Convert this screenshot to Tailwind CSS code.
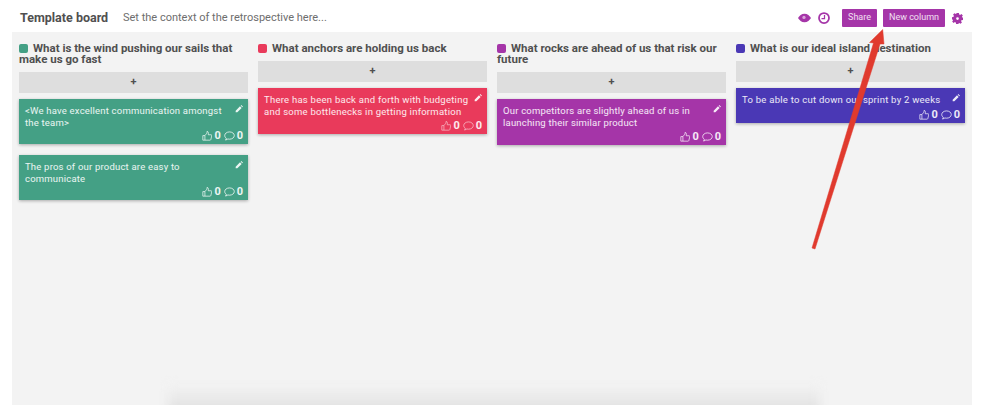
<!DOCTYPE html>
<html lang="en">
<head>
    <meta charset="UTF-8">
    <meta name="viewport" content="width=device-width, initial-scale=1.0">
    <title>Template board</title>
    <script src="https://cdn.jsdelivr.net/npm/@tailwindcss/browser@4"></script>
</head>
<body class="bg-white font-['Roboto',sans-serif] h-[419px] w-[983px] overflow-hidden relative">
    <!-- Header -->
    <header class="h-[32px] pt-[4px] pl-[20px] pr-[20px] flex items-center">
        <h1 class="text-[12.500px] font-bold text-[#505050] w-[103px]">Template board</h1>
        <p class="text-[11px] text-[#6e6e6e]">Set the context of the retrospective here...</p>
        <div class="ml-auto flex items-center">
            <svg class="w-[13px] h-[10px] text-[#a535a8]" viewBox="0 0 24 18" fill="currentColor"><path d="M12 1C6.500 1 2.500 5 0 9c2.500 4 6.500 8 12 8s9.500-4 12-8c-2.500-4-6.500-8-12-8z"/><circle cx="11" cy="8" r="3" fill="#d9a6da"/></svg>
            <svg class="w-[12px] h-[12px] ml-[7px] text-[#a535a8]" viewBox="0 0 24 24" fill="none" stroke="currentColor" stroke-width="3.500"><circle cx="12" cy="12" r="10"/><path stroke-width="2.500" d="M13 6v7H7"/></svg>
            <button class="ml-[12px] h-[18px] w-[35px] bg-[#a535a8] text-white/85 text-[9px] rounded-[1px]">Share</button>
            <button class="ml-[6px] h-[18px] w-[62px] bg-[#a535a8] text-white/85 text-[9px] rounded-[1px]">New column</button>
            <svg class="w-[11px] h-[11px] ml-[7px] text-[#a535a8]" viewBox="0 0 24 24" fill="currentColor"><path fill-rule="evenodd" d="M9 0h6l.8 3.500 1.800.8 3-1.900 3 3-1.900 3 .8 1.800L24 9v6l-3.500.8-.8 1.800 1.900 3-3 3-3-1.900-1.800.8L15 24H9l-.8-3.500-1.800-.8-3 1.900-3-3 1.900-3-.8-1.800L0 15V9l3.500-.8.8-1.800-1.900-3 3-3 3 1.900 1.800-.8zm3 9a3 3 0 1 0 0 6 3 3 0 0 0 0-6z"/></svg>
        </div>
    </header>

    <!-- Board -->
    <main class="mx-[12px] w-[960px] h-[373px] bg-[#f3f3f3] pl-[7px] pr-[7px] pt-[11px] grid grid-cols-4 gap-x-[10px] items-start">
        <section>
            <h2 class="text-[11.500px] leading-[11px] font-bold text-[#505050]"><span class="inline-block w-[9px] h-[9px] rounded-[2px] bg-[#44a085] mr-[5px] align-[-1px]"></span>What is the wind pushing our sails that make us go fast</h2>
            <button class="block w-full h-[21px] mt-[7px] bg-[#dedede] text-[#505050] text-[11px] font-bold">+</button>
            <article class="mt-[6px] h-[45px] bg-[#44a085] text-white/90 px-[6px] pt-[6px] shadow-[0_1px_3px_rgba(0,0,0,0.3)] relative">
                <p class="text-[9.500px] leading-[12px] tracking-[0.2px] w-[205px]">&lt;We have excellent communication amongst the team&gt;</p>
                <svg class="absolute right-[5px] top-[6px] w-[8px] h-[8px] text-white/90" viewBox="0 0 24 24" fill="currentColor"><path d="M2 17 15 4l5 5L7 22H2zM17 2l2-2 5 5-2 2z"/></svg>
                <div class="absolute right-[5px] bottom-[2px] flex items-center gap-[2px] text-[11px] leading-[12px] font-bold">
                    <svg class="w-[10px] h-[10px]" viewBox="0 0 24 24" fill="none" stroke="currentColor" stroke-width="1.800"><path d="M7 11v11H2V11zM7 11l5-6V1c3 0 4 3 3 8h7c1 0 2 1 1.500 2.500L21 21c-.3.800-1 1-2 1H7"/></svg><span>0</span>
                    <svg class="w-[11px] h-[10px] ml-[1px]" viewBox="0 0 24 22" fill="none" stroke="currentColor" stroke-width="1.800"><path d="M12 2C6 2 1.500 5.500 1.500 10c0 2.500 1.300 4.500 3.500 6l-1.500 4 5-2.500c1 .3 2.300.5 3.500.5 6 0 10.500-3.500 10.500-8S18 2 12 2z"/></svg><span>0</span>
                </div>
            </article>
            <article class="mt-[11px] h-[45px] bg-[#44a085] text-white/90 px-[6px] pt-[6px] shadow-[0_1px_3px_rgba(0,0,0,0.3)] relative">
                <p class="text-[9.500px] leading-[12px] tracking-[0.2px] w-[200px]">The pros of our product are easy to communicate</p>
                <svg class="absolute right-[5px] top-[6px] w-[8px] h-[8px] text-white/90" viewBox="0 0 24 24" fill="currentColor"><path d="M2 17 15 4l5 5L7 22H2zM17 2l2-2 5 5-2 2z"/></svg>
                <div class="absolute right-[5px] bottom-[2px] flex items-center gap-[2px] text-[11px] leading-[12px] font-bold">
                    <svg class="w-[10px] h-[10px]" viewBox="0 0 24 24" fill="none" stroke="currentColor" stroke-width="1.800"><path d="M7 11v11H2V11zM7 11l5-6V1c3 0 4 3 3 8h7c1 0 2 1 1.500 2.500L21 21c-.3.800-1 1-2 1H7"/></svg><span>0</span>
                    <svg class="w-[11px] h-[10px] ml-[1px]" viewBox="0 0 24 22" fill="none" stroke="currentColor" stroke-width="1.800"><path d="M12 2C6 2 1.500 5.500 1.500 10c0 2.500 1.300 4.500 3.500 6l-1.500 4 5-2.500c1 .3 2.300.5 3.500.5 6 0 10.500-3.500 10.500-8S18 2 12 2z"/></svg><span>0</span>
                </div>
            </article>
        </section>

        <section>
            <h2 class="text-[11.500px] leading-[11px] font-bold text-[#505050]"><span class="inline-block w-[9px] h-[9px] rounded-[2px] bg-[#e93a5b] mr-[5px] align-[-1px]"></span>What anchors are holding us back</h2>
            <button class="block w-full h-[21px] mt-[7px] bg-[#dedede] text-[#505050] text-[11px] font-bold">+</button>
            <article class="mt-[6px] h-[46px] bg-[#e93a5b] text-white/90 px-[6px] pt-[6px] shadow-[0_1px_3px_rgba(0,0,0,0.3)] relative">
                <p class="text-[9.500px] leading-[12px] tracking-[0.25px] w-[208px]">There has been back and forth with budgeting and some bottlenecks in getting information</p>
                <svg class="absolute right-[5px] top-[6px] w-[8px] h-[8px] text-white/90" viewBox="0 0 24 24" fill="currentColor"><path d="M2 17 15 4l5 5L7 22H2zM17 2l2-2 5 5-2 2z"/></svg>
                <div class="absolute right-[5px] bottom-[2px] flex items-center gap-[2px] text-[11px] leading-[12px] font-bold">
                    <svg class="w-[10px] h-[10px] opacity-70" viewBox="0 0 24 24" fill="none" stroke="currentColor" stroke-width="1.800"><path d="M7 11v11H2V11zM7 11l5-6V1c3 0 4 3 3 8h7c1 0 2 1 1.500 2.500L21 21c-.3.800-1 1-2 1H7"/></svg><span>0</span>
                    <svg class="w-[11px] h-[10px] ml-[1px] opacity-70" viewBox="0 0 24 22" fill="none" stroke="currentColor" stroke-width="1.800"><path d="M12 2C6 2 1.500 5.500 1.500 10c0 2.500 1.300 4.500 3.500 6l-1.500 4 5-2.500c1 .3 2.300.5 3.500.5 6 0 10.500-3.500 10.500-8S18 2 12 2z"/></svg><span>0</span>
                </div>
            </article>
        </section>

        <section>
            <h2 class="text-[11.500px] leading-[11px] font-bold text-[#505050]"><span class="inline-block w-[9px] h-[9px] rounded-[2px] bg-[#a535a8] mr-[5px] align-[-1px]"></span>What rocks are ahead of us that risk our future</h2>
            <button class="block w-full h-[21px] mt-[7px] bg-[#dedede] text-[#505050] text-[11px] font-bold">+</button>
            <article class="mt-[6px] h-[46px] bg-[#a535a8] text-white/90 px-[6px] pt-[6px] shadow-[0_1px_3px_rgba(0,0,0,0.3)] relative">
                <p class="text-[9.500px] leading-[12px] tracking-[0.2px] w-[200px]">Our competitors are slightly ahead of us in launching their similar product</p>
                <svg class="absolute right-[5px] top-[6px] w-[8px] h-[8px] text-white/90" viewBox="0 0 24 24" fill="currentColor"><path d="M2 17 15 4l5 5L7 22H2zM17 2l2-2 5 5-2 2z"/></svg>
                <div class="absolute right-[5px] bottom-[2px] flex items-center gap-[2px] text-[11px] leading-[12px] font-bold">
                    <svg class="w-[10px] h-[10px]" viewBox="0 0 24 24" fill="none" stroke="currentColor" stroke-width="1.800"><path d="M7 11v11H2V11zM7 11l5-6V1c3 0 4 3 3 8h7c1 0 2 1 1.500 2.500L21 21c-.3.800-1 1-2 1H7"/></svg><span>0</span>
                    <svg class="w-[11px] h-[10px] ml-[1px]" viewBox="0 0 24 22" fill="none" stroke="currentColor" stroke-width="1.800"><path d="M12 2C6 2 1.500 5.500 1.500 10c0 2.500 1.300 4.500 3.500 6l-1.500 4 5-2.500c1 .3 2.300.5 3.500.5 6 0 10.500-3.500 10.500-8S18 2 12 2z"/></svg><span>0</span>
                </div>
            </article>
        </section>

        <section>
            <h2 class="text-[11.500px] leading-[11px] font-bold text-[#505050]"><span class="inline-block w-[9px] h-[9px] rounded-[2px] bg-[#4a38b5] mr-[5px] align-[-1px]"></span>What is our ideal island destination</h2>
            <button class="block w-full h-[21px] mt-[7px] bg-[#dedede] text-[#505050] text-[11px] font-bold">+</button>
            <article class="mt-[6px] h-[35px] bg-[#4a38b5] text-white/90 px-[6px] pt-[6px] shadow-[0_1px_3px_rgba(0,0,0,0.3)] relative">
                <p class="text-[9.500px] leading-[12px] tracking-[0.25px] w-[208px]">To be able to cut down our sprint by 2 weeks</p>
                <svg class="absolute right-[5px] top-[6px] w-[8px] h-[8px] text-white/90" viewBox="0 0 24 24" fill="currentColor"><path d="M2 17 15 4l5 5L7 22H2zM17 2l2-2 5 5-2 2z"/></svg>
                <div class="absolute right-[5px] bottom-[2px] flex items-center gap-[2px] text-[11px] leading-[12px] font-bold">
                    <svg class="w-[10px] h-[10px]" viewBox="0 0 24 24" fill="none" stroke="currentColor" stroke-width="1.800"><path d="M7 11v11H2V11zM7 11l5-6V1c3 0 4 3 3 8h7c1 0 2 1 1.500 2.500L21 21c-.3.800-1 1-2 1H7"/></svg><span>0</span>
                    <svg class="w-[11px] h-[10px] ml-[1px]" viewBox="0 0 24 22" fill="none" stroke="currentColor" stroke-width="1.800"><path d="M12 2C6 2 1.500 5.500 1.500 10c0 2.500 1.300 4.500 3.500 6l-1.500 4 5-2.500c1 .3 2.300.5 3.500.5 6 0 10.500-3.500 10.500-8S18 2 12 2z"/></svg><span>0</span>
                </div>
            </article>
        </section>
    </main>

    <!-- Soft shadow along the bottom edge of the board -->
    <div class="absolute left-[168px] top-[384px] w-[652px] h-[30px] bg-gradient-to-b from-[#f3f3f3] to-[#dfdfdf] blur-[5px]"></div>
    <div class="absolute left-0 top-[405px] w-[983px] h-[14px] bg-white"></div>

    <!-- Annotation arrow -->
    <svg class="absolute left-0 top-0 w-[983px] h-[419px] pointer-events-none" viewBox="0 0 983 419">
        <path d="M812 248 873.500 43 869.500 42.500 882.700 29.500 884 44 880 44 815 249z" fill="#e03a2e" stroke="#e03a2e" stroke-width="0.500" stroke-linejoin="round"/>
    </svg>
</body>
</html>
